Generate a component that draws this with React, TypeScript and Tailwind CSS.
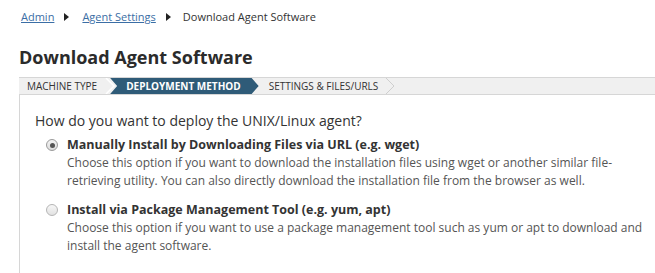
import React, { useState } from 'react'

type Option = { id: string; label: string; desc: string }

const options: Option[] = [
  {
    id: 'url',
    label: 'Manually Install by Downloading Files via URL (e.g. wget)',
    desc: 'Choose this option if you want to download the installation files using wget or another similar file-retrieving utility. You can also directly download the installation file from the browser as well.',
  },
  {
    id: 'pkg',
    label: 'Install via Package Management Tool (e.g. yum, apt)',
    desc: 'Choose this option if you want to use a package management tool such as yum or apt to download and install the agent software.',
  },
]

const Caret = ({ className }: { className: string }) => (
  <svg width="5" height="8" viewBox="0 0 5 8" className={className}>
    <path d="M0 0 L5 4 L0 8 Z" fill="#222" />
  </svg>
)

const Radio: React.FC<{ checked: boolean }> = ({ checked }) => (
  <span
    className={`mt-[3px] flex h-[12px] w-[12px] shrink-0 items-center justify-center rounded-full border bg-gradient-to-b ${
      checked ? 'border-[#9a9a9a] from-[#f4f4f4] to-[#dcdcdc]' : 'border-[#b5b5b5] from-[#f7f7f7] to-[#e2e2e2]'
    }`}
  >
    {checked && <span className="h-[5px] w-[5px] rounded-full bg-[#555]" />}
  </span>
)

export default function App() {
  const [sel, setSel] = useState('url')

  return (
    <div className="h-[273px] w-[655px] overflow-hidden bg-white font-['Open_Sans',sans-serif] text-[#333]">
      <div className="flex items-center pl-[21px] pt-[9px] text-[11px] leading-[16px]">
        <a className="text-[#3b6ea5] underline">Admin</a>
        <Caret className="ml-[10px] mr-[13px]" />
        <a className="text-[#3b6ea5] underline">Agent Settings</a>
        <Caret className="ml-[10px] mr-[12px]" />
        <span>Download Agent Software</span>
      </div>

      <h1 className="mt-[19px] pl-[19px] text-[18px] font-bold leading-[26px] text-[#2b2b2b]">
        Download Agent Software
      </h1>

      <div className="ml-[19px] mt-[7px] flex h-[18px] items-stretch border-y border-[#d6d6d6] bg-[#f0f0f0] text-[10px] leading-[16px] text-[#333]">
        <div className="flex items-center pl-[8px]">MACHINE TYPE</div>
        <svg width="14" height="16" viewBox="0 0 14 16" className="ml-[7px] shrink-0">
          <path d="M2 0 L10 8 L2 16" fill="none" stroke="#fff" strokeWidth="1.5" />
        </svg>
        <div className="-ml-[8px] flex items-center bg-[#2f5b78] pl-[16px] pr-[18px] font-bold text-white [clip-path:polygon(0_0,calc(100%-7px)_0,100%_50%,calc(100%-7px)_100%,0_100%,7px_50%)]">
          DEPLOYMENT METHOD
        </div>
        <div className="flex items-center pl-[10px]">SETTINGS &amp; FILES/URLS</div>
        <svg width="12" height="16" viewBox="0 0 12 16" className="ml-[7px] shrink-0">
          <path d="M1 0 L9 8 L1 16" fill="none" stroke="#cfcfcf" strokeWidth="1" />
        </svg>
      </div>

      <div className="ml-[19px] h-[200px] border-l border-[#d6d6d6] pl-[15px] pt-[16px]">
        <p className="text-[14px] leading-[20px] text-[#333]">How do you want to deploy the UNIX/Linux agent?</p>
        <div className="mt-[5px] flex flex-col gap-[11px] pl-[11px]">
          {options.map((o) => (
            <label key={o.id} className="flex cursor-pointer gap-[9px]" onClick={() => setSel(o.id)}>
              <Radio checked={sel === o.id} />
              <div className="w-[578px]">
                <div className="text-[12.5px] font-bold leading-[18px] text-[#333]">{o.label}</div>
                <div className="text-[12px] leading-[18px] text-[#555]">{o.desc}</div>
              </div>
            </label>
          ))}
        </div>
      </div>
    </div>
  )
}
